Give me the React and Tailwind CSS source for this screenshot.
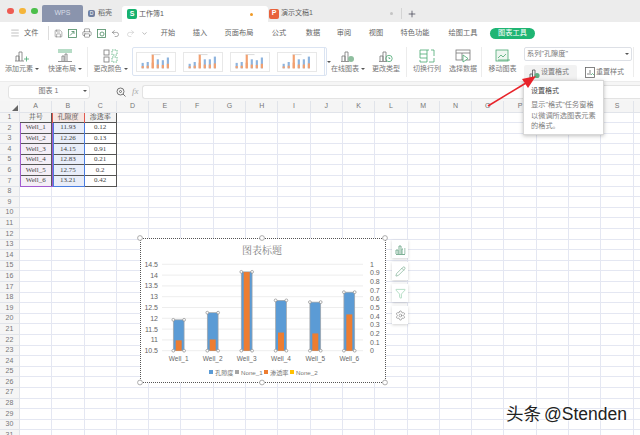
import { Menu, Save, Printer, Undo2, Redo2, Plus, Pencil, Funnel, Settings, ChevronDown } from 'lucide-react'

const cols = ['A', 'B', 'C', 'D', 'E', 'F', 'G', 'H', 'I', 'J', 'K', 'L', 'M', 'N', 'O', 'P', 'Q', 'R', 'S', '']
const rows = Array.from({ length: 31 }, (_, i) => i + 1)
const wells = [
  ['井号', '孔隙度', '渗透率'],
  ['Well_1', '11.93', '0.12'],
  ['Well_2', '12.26', '0.13'],
  ['Well_3', '14.15', '0.91'],
  ['Well_4', '12.83', '0.21'],
  ['Well_5', '12.75', '0.2'],
  ['Well_6', '13.21', '0.42'],
]
const tabs = [
  ['开始', 'w-[32px]'],
  ['插入', 'w-[32px]'],
  ['页面布局', 'w-[46px]'],
  ['公式', 'w-[34px]'],
  ['数据', 'w-[34px]'],
  ['审阅', 'w-[28px]'],
  ['视图', 'w-[36px]'],
  ['特色功能', 'w-[42px]'],
  ['绘图工具', 'w-[54px]'],
]
const cjk = 'font-["Liberation_Sans","Noto_Sans_CJK_SC",sans-serif]'

function Caret() {
  return <span className="ml-[2px] inline-block h-0 w-0 border-x-[2px] border-t-[2px] border-x-transparent border-t-[#555] align-middle" />
}

function Ico({ children, w = 16 }) {
  return (
    <svg width={w} height="14" viewBox="0 0 16 14" fill="none" stroke="#777" strokeWidth="0.8">
      {children}
    </svg>
  )
}

function RibbonBtn({ label, caret, width, children }) {
  return (
    <div className={`flex shrink-0 flex-col items-center pt-[4px] ${width}`}>
      <div className="flex h-[15px] items-center">{children}</div>
      <div className="mt-[1px] text-[7px] leading-[10px] whitespace-nowrap text-[#777]">
        {label}
        {caret && <Caret />}
      </div>
    </div>
  )
}

function Divider() {
  return <div className="mx-[1px] mt-[3px] h-[30px] w-px shrink-0 bg-[#ececec]" />
}

function Thumb({ hot }) {
  const bars = hot ? [5, 7, 15, 10, 10, 13] : [6, 7, 15, 10, 9, 12]
  return (
    <svg width="40" height="20" viewBox="0 0 40 20" className="shrink-0 border border-[#e8e8e8] bg-white">
      <rect x="15" y="1.5" width="10" height="0.8" fill="#ccc" />
      {bars.map((h, i) => (
        <g key={i}>
          <rect x={4 + i * 5.6} y={17 - h} width="2.4" height={h} fill={i === 2 ? '#f2a070' : '#8eb4de'} />
          <rect x={4 + i * 5.6} y={17 - h / 2.4} width="2.4" height={h / 2.4} fill="#f2a070" />
        </g>
      ))}
    </svg>
  )
}

function Handle({ cx, cy, r = 1.4 }) {
  return <circle cx={cx} cy={cy} r={r} fill="#fff" stroke="#8d8d8d" strokeWidth="0.7" />
}

// chart coordinates are page pixels minus the chart's corner (140, 238)
function Chart() {
  const yL = (v) => 112.7 - (v - 10.5) * 21.6
  const yR = (v) => 112.7 - v * 86.4
  const data = [
    [38.7, 11.93, 0.12, 'Well_1'],
    [72.7, 12.26, 0.13, 'Well_2'],
    [106.7, 14.15, 0.91, 'Well_3'],
    [141, 12.83, 0.21, 'Well_4'],
    [175.3, 12.75, 0.2, 'Well_5'],
    [209.3, 13.21, 0.42, 'Well_6'],
  ]
  const left = [10.5, 11, 11.5, 12, 12.5, 13, 13.5, 14, 14.5]
  const right = [0, 0.1, 0.2, 0.3, 0.4, 0.5, 0.6, 0.7, 0.8, 0.9, 1]
  return (
    <svg width="246" height="145" viewBox="0 0 246 145" className="overflow-visible" fontFamily="Liberation Sans, Noto Sans CJK SC, sans-serif">
      <text x="122" y="15.5" textAnchor="middle" fontSize="10" fill="#7f7f7f" fontFamily="Liberation Serif, Noto Serif CJK SC, Noto Sans CJK SC, serif">图表标题</text>
      {left.map((v) => (
        <g key={v}>
          <line x1="22" x2="223" y1={yL(v)} y2={yL(v)} stroke="#e9e9e9" strokeWidth="0.8" />
          <text x="18" y={yL(v) + 2.5} textAnchor="end" fontSize="7" fill="#666">{v}</text>
        </g>
      ))}
      {right.map((v) => (
        <text key={v} x="230" y={yR(v) + 2.5} fontSize="7" fill="#666">{v}</text>
      ))}
      {data.map(([x, a, b, name]) => (
        <g key={name}>
          <rect x={x - 5.4} y={yL(a)} width="10.8" height={yL(10.5) - yL(a)} fill="#5b9bd5" stroke="#a6a6a6" strokeWidth="0.7" />
          <rect x={x - 3} y={yR(b)} width="6" height={yR(0) - yR(b)} fill="#ed7d31" />
          <Handle cx={x - 5.4} cy={yL(a)} />
          <Handle cx={x + 5.4} cy={yL(a)} />
          <Handle cx={x - 5.4} cy={yL(10.5)} />
          <Handle cx={x + 5.4} cy={yL(10.5)} />
          <text x={x} y="122.5" textAnchor="middle" fontSize="6.5" fill="#666">{name}</text>
        </g>
      ))}
      <rect x="69" y="132" width="4" height="4" fill="#5b9bd5" />
      <text x="75" y="136.5" fontSize="6.2" fill="#777">孔隙度</text>
      <rect x="95" y="132" width="4" height="4" fill="#a5a5a5" />
      <text x="101" y="136.5" fontSize="6.2" fill="#777">None_1</text>
      <rect x="124" y="132" width="4" height="4" fill="#ed7d31" />
      <text x="130" y="136.5" fontSize="6.2" fill="#777">渗透率</text>
      <rect x="150" y="132" width="4" height="4" fill="#ffc000" />
      <text x="156" y="136.5" fontSize="6.2" fill="#777">None_2</text>
      <Handle cx="0" cy="0" r="2.4" />
      <Handle cx="122" cy="0" r="2.4" />
      <Handle cx="245" cy="0" r="2.4" />
      <Handle cx="0" cy="144.5" r="2.4" />
      <Handle cx="122" cy="144.5" r="2.4" />
      <Handle cx="245" cy="144.5" r="2.4" />
    </svg>
  )
}

function SideBtn({ children }) {
  return <div className="flex h-[18px] w-[16px] items-center justify-center bg-white shadow-[0_1px_3px_rgba(0,0,0,0.18)]">{children}</div>
}

export default function App() {
  return (
    <div className={`relative h-[435px] w-[640px] overflow-hidden bg-white ${cjk}`}>
      {/* title bar */}
      <div className="flex h-[22px] items-end bg-[#ececec]">
        <div className="flex h-[22px] w-[42px] items-center gap-[5.5px] pl-[7px]">
          <span className="size-[6.5px] rounded-full bg-[#ee5b52]" />
          <span className="size-[6.5px] rounded-full bg-[#f5b53a]" />
          <span className="size-[6.5px] rounded-full bg-[#4cbf4b]" />
        </div>
        <div className="flex h-[17px] w-[41px] items-center justify-center rounded-t-[2px] bg-[#8a94ad] text-[7px] text-[#d8dce6]">WPS</div>
        <div className="flex h-[17px] w-[39px] items-center pl-[5px] text-[7px] text-[#666]">
          <span className="mr-[3px] flex size-[7px] items-center justify-center rounded-[2px] bg-[#6f7f9f] text-[5px] text-white">D</span>
          稻壳
        </div>
        <div className="flex h-[16px] w-[146px] items-center rounded-t-[3px] bg-white pl-[5px] text-[7px] text-[#555]">
          <span className="mr-[2px] flex size-[10px] items-center justify-center rounded-[2px] bg-[#17b26f] text-[7px] font-bold text-white">S</span>
          工作簿1
          <span className="mr-[3px] ml-auto size-[3px] rounded-full bg-[#f09a26]" />
          <span className="mr-[12px] w-0" />
        </div>
        <div className="flex h-[17px] w-[134px] items-center text-[7px] text-[#666]">
          <span className="mr-[2px] ml-[1px] flex size-[10px] items-center justify-center rounded-[2px] bg-[#e8623c] text-[7px] font-bold text-white">P</span>
          演示文稿1
          <span className="mr-[8px] ml-auto size-[3px] rounded-full bg-[#c4c4c4]" />
          <span className="h-[11px] w-px bg-[#d4d4d4]" />
        </div>
        <div className="flex h-[17px] items-center pl-[5px]">
          <Plus size={10} strokeWidth={1.8} color="#445" />
        </div>
      </div>

      {/* menu row */}
      <div className="flex h-[22px] items-center bg-white text-[7.2px] text-[#666]">
        <div className="flex w-[20px] justify-end">
          <Menu size={10} strokeWidth={1.1} color="#777" />
        </div>
        <span className="ml-[4px] w-[24px]">文件</span>
        <span className="h-[14px] w-px bg-[#ddd]" />
        <div className="flex w-[103px] items-center pl-[2px]">
          {[
            <Save size={9} strokeWidth={1.2} color="#555" />,
            <svg width="9" height="9" viewBox="0 0 9 9" fill="none" stroke="#4a8a62" strokeWidth="0.8"><rect x="0.5" y="0.5" width="8" height="8" /><path d="M2 6.5 L6 2.5 M3.5 2.5 H6 V5" /></svg>,
            <Printer size={10} strokeWidth={1.2} color="#555" />,
            <svg width="9" height="9" viewBox="0 0 9 9" fill="none" stroke="#4a8a62" strokeWidth="0.8"><rect x="0.5" y="0.5" width="8" height="8" /><circle cx="5" cy="5" r="2" /></svg>,
            <Undo2 size={9} strokeWidth={1.3} color="#555" />,
            <Redo2 size={9} strokeWidth={1.3} color="#bbb" />,
            <ChevronDown size={7} strokeWidth={1.5} color="#666" />,
          ].map((ic, i) => (
            <div key={i} className="flex w-[14.5px] justify-center">{ic}</div>
          ))}
        </div>
        {tabs.map(([t, w]) => (
          <div key={t} className={`text-center whitespace-nowrap ${w}`}>{t}</div>
        ))}
        <div className="flex h-[11px] w-[45px] items-center justify-center rounded-full bg-[#1fb573] text-[7.2px] text-white">图表工具</div>
      </div>

      {/* ribbon */}
      <div className="flex h-[37px] items-start bg-white">
        <RibbonBtn label="添加元素" caret width="w-[44px]">
          <Ico><path d="M2 12V7h3v5M5 12V3h3v9M1 12h9" /><path d="M10 10h5M12.5 7.5v5" stroke="#4aa872" /></Ico>
        </RibbonBtn>
        <RibbonBtn label="快速布局" caret width="w-[42px]">
          <Ico><path d="M1 1h14M1 3h14" stroke="#4aa872" /><path d="M5 12V7h2v5M8 12V5h2v7M1 12.5h14" /></Ico>
        </RibbonBtn>
        <Divider />
        <RibbonBtn label="更改颜色" caret width="w-[43px]">
          <Ico><rect x="1" y="1" width="5" height="5" /><rect x="1" y="8" width="5" height="5" /><rect x="9" y="1" width="5" height="5" stroke="#4aa872" strokeDasharray="1.5 1" /><rect x="9" y="8" width="5" height="5" stroke="#4aa872" strokeDasharray="1.5 1" /></Ico>
        </RibbonBtn>
        <div className="mt-[3px] flex h-[29px] w-[195px] shrink-0 items-center gap-[7px] rounded-[2px] border border-[#dbe4f2] pl-[3px]">
          <Thumb />
          <Thumb hot />
          <Thumb />
          <Thumb hot />
          <div className="ml-auto flex h-full w-[6px] items-center justify-center border-l border-[#dbe4f2]">
            <Caret />
          </div>
        </div>
        <div className="w-[2px] shrink-0" />
        <RibbonBtn label="在线图表" caret width="w-[38px]">
          <Ico><path d="M2 12V7h3v5M5 12V3h3v9M1 12.5h8" /><circle cx="11" cy="10" r="3" fill="#8fbf9f" stroke="none" /></Ico>
        </RibbonBtn>
        <RibbonBtn label="更改类型" width="w-[38px]">
          <Ico><path d="M2 12V7h3v5M5 12V3h3v9M1 12.5h8" /><circle cx="11" cy="9.5" r="3.2" stroke="#4aa872" /><path d="M11 8v1.5h1.3" stroke="#4aa872" /></Ico>
        </RibbonBtn>
        <Divider />
        <RibbonBtn label="切换行列" width="w-[38px]">
          <Ico><rect x="1" y="1" width="14" height="12" stroke="#4aa872" strokeDasharray="9 2" /><path d="M1 5h7M1 9h7M8 1v12" stroke="#4aa872" /></Ico>
        </RibbonBtn>
        <RibbonBtn label="选择数据" width="w-[34px]">
          <Ico><rect x="1" y="1" width="14" height="10" /><path d="M1 4h14M7 4v7" /><path d="M8 6l5 3.5-5 3.5z" stroke="#4aa872" fill="#fff" /></Ico>
        </RibbonBtn>
        <Divider />
        <RibbonBtn label="移动图表" width="w-[39px]">
          <Ico><rect x="1" y="1" width="12" height="11" stroke="#4aa872" fill="#eef6f0" /><path d="M3 9l3-3 2 2 3-3M3 11h12" stroke="#4aa872" /></Ico>
        </RibbonBtn>
        <div className="ml-[2px] flex w-[108px] shrink-0 flex-col">
          <div className="mt-[3px] flex h-[14px] items-center justify-between rounded-[2px] border border-[#dde0e6] pr-[2px] pl-[2px] text-[7.2px] text-[#777]">
            系列"孔隙度"
            <Caret />
          </div>
          <div className="mt-[4px] flex items-center">
            <div className="flex h-[15px] w-[53px] items-center gap-[1px] rounded-t-[2px] bg-[#f2f2f2] pl-[5px] text-[7px] text-[#777]">
              <svg width="11" height="12" viewBox="0 0 11 12" fill="none" stroke="#555" strokeWidth="0.8"><path d="M1 11V7h2.5v4M3.5 11V3H6v8" /><circle cx="8" cy="8.5" r="2.6" fill="#5fae82" stroke="none" /></svg>
              设置格式
            </div>
            <div className="ml-[8px] flex items-center gap-[1px] text-[7px] text-[#777]">
              <svg width="10" height="11" viewBox="0 0 10 11" fill="none" stroke="#666" strokeWidth="0.8"><rect x="0.5" y="0.5" width="9" height="10" /><path d="M3 8V6M5 8V3" /><path d="M6 8l1.5-1.5L9 8" stroke="#4aa872" /></svg>
              重置样式
            </div>
          </div>
        </div>
        <Divider />
      </div>

      {/* formula bar */}
      <div className="flex h-[20px] items-center border-t border-[#ececec] bg-[#f6f6f6] pl-[8px]">
        <div className="flex h-[14px] w-[82px] items-center justify-center rounded-[3px] border border-[#e3e3e3] bg-white pl-[3px] text-[7px] text-[#777]">
          <span className="flex-1 pl-[4px] text-center">图表 1</span>
          <span className="mr-[2px]"><Caret /></span>
        </div>
        <svg width="10" height="10" viewBox="0 0 10 10" fill="none" stroke="#666" strokeWidth="0.9" className="ml-[26px]">
          <circle cx="4.5" cy="4.5" r="3.5" />
          <circle cx="4.5" cy="4.5" r="1" />
          <path d="M7 7l2.5 2.5" />
        </svg>
        <span className="ml-[6px] font-['Liberation_Serif',serif] text-[9px] text-[#aaa] italic">fx</span>
        <div className="ml-[3px] h-[14px] flex-1 rounded-l-[3px] border border-r-0 border-[#e3e3e3] bg-white" />
      </div>

      {/* sheet */}
      <div className="grid grid-cols-[20px_repeat(20,32.3px)] grid-rows-[11.5px_repeat(31,10.6px)] bg-white">
        <div className="flex items-end justify-end border-r border-b border-[#e1e4ea] bg-[#f5f5f5] pr-[1px] pb-[1px]">
          <span className="h-0 w-0 border-b-[6px] border-l-[6px] border-b-[#666] border-l-transparent" />
        </div>
        {cols.map((c, i) => (
          <div key={i} className="flex items-center justify-center border-r border-b border-[#e1e4ea] bg-[#f5f5f5] text-[7px] text-[#777]">{c}</div>
        ))}
        {rows.map((r) => (
          <div key={r} className="contents">
            <div className="flex items-center justify-center border-r border-b border-[#e1e4ea] bg-[#f5f5f5] text-[7px] text-[#777]">{r}</div>
            {cols.map((c, i) => {
              const val = r <= 7 && i < 3 ? wells[r - 1][i] : null
              if (val === null) return <div key={i} className="border-r border-b border-[#e4e7f2]" />
              let tint = ''
              if (r === 1) tint = i === 1 ? 'bg-[#f6e6e2]' : 'bg-[#f3f3f3]'
              else if (i === 0) tint = 'bg-[#f4eef6]'
              else if (i === 1) tint = 'bg-[#e8edf8]'
              return (
                <div key={i} className={`flex items-center justify-center overflow-hidden border-r border-b border-[#555] font-['Liberation_Serif','Noto_Serif_CJK_SC','Noto_Sans_CJK_SC',serif] text-[7px] leading-none text-[#444] ${tint}`}>
                  {val}
                </div>
              )
            })}
          </div>
        ))}
      </div>

      {/* range highlights */}
      <div className="absolute top-[123px] left-[20px] h-[64px] w-[32.5px] border-x border-[#a25bd0]" />
      <div className="absolute top-[123px] left-[52.5px] h-[64px] w-[32.5px] border-x border-[#4a7de0]" />
      <div className="absolute top-[186px] left-[20px] h-px w-[32.5px] bg-[#a25bd0]" />
      <div className="absolute top-[186px] left-[52.5px] h-px w-[32.5px] bg-[#4a7de0]" />
      <div className="absolute top-[113px] left-[52px] h-[10px] w-[33px] border-x border-[#e0584f]" />

      {/* chart */}
      <div className="absolute top-[238px] left-[140px] h-[145px] w-[246px] border border-dotted border-[#555] bg-white">
        <div className="-mt-px -ml-px">
          <Chart />
        </div>
      </div>
      <div className="absolute top-[240px] left-[392px] flex flex-col gap-[4px]">
        <SideBtn>
          <svg width="11" height="11" viewBox="0 0 11 11" fill="none" stroke="#6fa88a" strokeWidth="0.9"><path d="M1 10V6h2v4M4 10V2h2v8M7 10V5h1M1 10.5h9M9 7h1.5M9 5h1.5M9 9h1.5" /></svg>
        </SideBtn>
        <SideBtn>
          <Pencil size={11} strokeWidth={1.2} color="#5c9a78" />
        </SideBtn>
        <SideBtn>
          <Funnel size={11} strokeWidth={1.1} color="#6fc090" />
        </SideBtn>
        <SideBtn>
          <Settings size={11} strokeWidth={1.1} color="#666" />
        </SideBtn>
      </div>

      {/* tooltip */}
      <div className="absolute top-[80px] left-[523px] h-[55px] w-[81px] border border-[#d8d8d8] bg-white px-[7px] pt-[4px] shadow-[0_1px_4px_rgba(0,0,0,0.25)]">
        <div className="text-[7px] leading-[11px] text-[#444]">设置格式</div>
        <div className="mt-[4px] text-[7.2px] leading-[10.5px] whitespace-nowrap text-[#808080]">
          显示"格式"任务窗格
          <br />
          以微调所选图表元素
          <br />
          的格式。
        </div>
      </div>

      {/* red arrow */}
      <svg width="640" height="435" className="pointer-events-none absolute top-0 left-0">
        <path d="M488 106 L526 83" stroke="#e8232a" strokeWidth="1.6" />
        <path d="M536 76 L522 79 L528 88 Z" fill="#e8232a" />
      </svg>

      {/* watermark */}
      <div className="absolute top-[404px] left-[506px] flex items-center gap-[3px] text-[17.5px] leading-[20px] whitespace-nowrap text-[#222] [text-shadow:0_0_2px_#fff,0_0_2px_#fff,0_0_2px_#fff]">
        <span>头条</span>
        <span>@Stenden</span>
      </div>
    </div>
  )
}
